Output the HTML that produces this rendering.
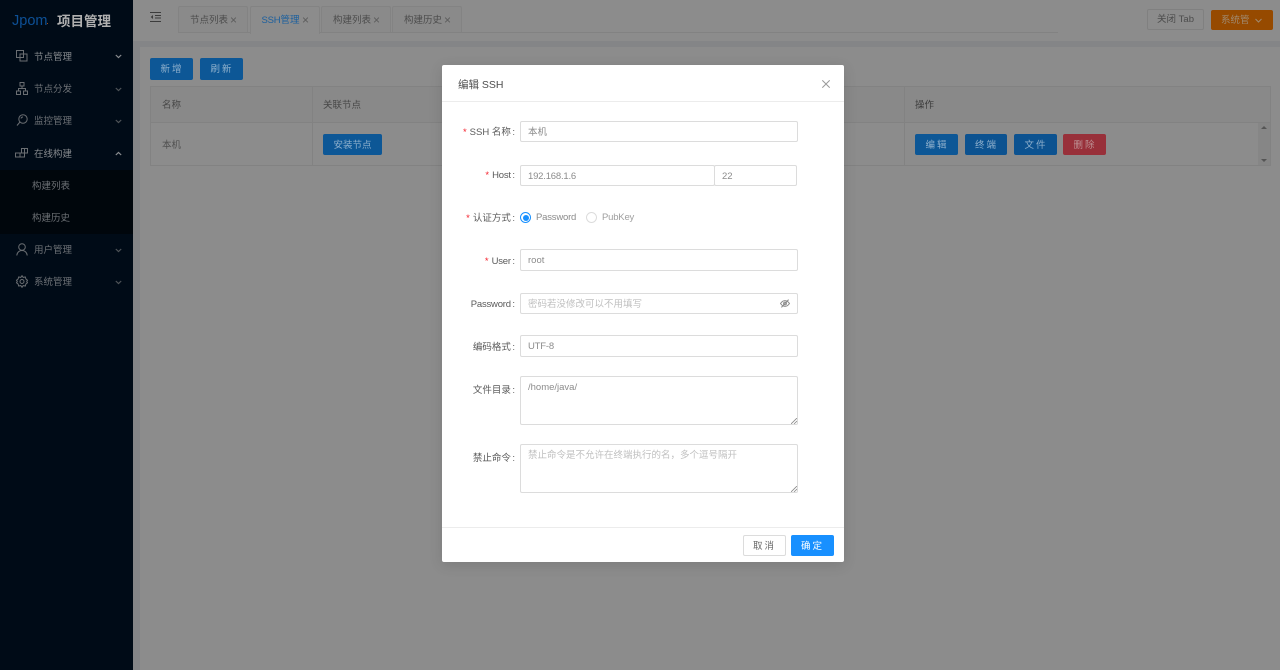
<!DOCTYPE html>
<html lang="zh"><head><meta charset="utf-8"><title>项目管理</title>
<style>
*{box-sizing:border-box;margin:0;padding:0}
html,body{width:1280px;height:670px;overflow:hidden;background:#8c8c8c}
body{font-family:"Liberation Sans","Noto Sans CJK SC",sans-serif;font-size:9.5px;color:#4a4a4a;position:relative;filter:blur(.3px)}
.a{position:absolute;white-space:nowrap}
.side{left:0;top:0;width:133px;height:670px;background:#000b17}
.sub{left:0;top:170px;width:133px;height:64px;background:#00060c}
.m{left:34px;color:#6d7176;line-height:14px;height:14px}
.m.on{color:#868a8e}
.s{left:32px;color:#6d7176;line-height:14px;height:14px}
.ic{position:absolute;fill:none;stroke:#6a6e72;stroke-width:1}
.tab{top:6px;height:27px;width:70px;border:1px solid #838383;border-bottom:0;border-radius:2px 2px 0 0;background:#8a8a8a;line-height:28px;padding-left:11px;color:#4c4c4c}
.tab i{font-style:normal;position:absolute;left:51px;top:0;color:#5c5c5c;font-size:12px;line-height:27px}
.btn{height:21.5px;border-radius:2px;background:#0d5796;color:#8fb0cc;text-align:center;line-height:23px;letter-spacing:2px;text-indent:1px}
.cell{background:#898989}
.line{background:#828282}
.modal{left:442px;top:65px;width:402px;height:497px;background:#fff;border-radius:2px;box-shadow:0 3px 14px rgba(0,0,0,.12)}
.lbl{right:765px;color:#5a5a5a;line-height:14px;height:14px;text-align:right}
.lbl b{color:#f5222d;font-weight:400;margin-right:3px;font-family:"Liberation Sans",sans-serif}
.lbl u{text-decoration:none;margin-left:1.5px}
.inp{left:520px;width:278px;height:21.5px;border:1px solid #dcdcdc;border-radius:2px;background:#fff;color:#8c8c8c;padding-left:7px;line-height:21px}
.ph{color:#bfbfbf}
.lat{letter-spacing:-.2px}
</style></head><body>

<div class="a side"></div>
<div class="a sub"></div>
<div class="a" style="left:12px;top:11.5px;font-size:14.5px;line-height:18px;color:#0d5096">Jpom</div>
<div class="a" style="left:46.5px;top:22.5px;width:1.5px;height:1.5px;background:#a8480d"></div>
<div class="a" style="left:57px;top:13px;font-size:13.5px;line-height:18px;font-weight:700;color:#b0b0b0">项目管理</div>

<svg class="ic" style="left:16px;top:50px" width="12" height="12" viewBox="0 0 12 12"><rect x=".5" y=".5" width="7" height="7"/><rect x="4" y="4" width="7" height="7"/></svg>
<div class="a m on" style="top:51px">节点管理</div>
<svg class="ic" style="left:16px;top:82px" width="12" height="13" viewBox="0 0 12 13"><rect x="4" y=".5" width="4" height="3.5"/><rect x=".5" y="9" width="4" height="3.5"/><rect x="7.5" y="9" width="4" height="3.5"/><path d="M6 4v2.5M2.5 9V6.5h7V9"/></svg>
<div class="a m" style="top:83px">节点分发</div>
<svg class="ic" style="left:16px;top:114px" width="12" height="12" viewBox="0 0 12 12"><circle cx="7" cy="5" r="4.2"/><path d="M4 8 1 11.5M5 4.5a2 2 0 0 1 2-1.5"/></svg>
<div class="a m" style="top:115px">监控管理</div>
<svg class="ic" style="left:15px;top:148px" width="13" height="10" viewBox="0 0 13 10"><rect x="6.5" y=".5" width="6" height="4.5"/><path d="M9.5.5V5"/><rect x=".5" y="5" width="9" height="4"/><path d="M5 5v4"/></svg>
<div class="a m on" style="top:148px">在线构建</div>
<div class="a s" style="top:180px">构建列表</div>
<div class="a s" style="top:212px">构建历史</div>
<svg class="ic" style="left:16px;top:243px" width="12" height="13" viewBox="0 0 12 13"><circle cx="6" cy="4" r="3.3"/><path d="M.8 12.5C1 9.5 3.2 7.5 6 7.5s5 2 5.2 5"/></svg>
<div class="a m" style="top:244px">用户管理</div>
<svg class="ic" style="left:16px;top:275px" width="12" height="13" viewBox="0 0 12 13"><path d="M6 .7 7.2 2.4 9.3 2l.6 2 1.6 1.3-.8 1.2.8 1.2L9.9 9l-.6 2-2.1-.4L6 12.3l-1.2-1.7-2.1.4-.6-2L.5 7.7l.8-1.2-.8-1.2L2.1 4l.6-2 2.1.4Z"/><circle cx="6" cy="6.5" r="2"/></svg>
<div class="a m" style="top:276px">系统管理</div>

<svg class="ic" style="left:115px;top:54px;stroke:#8a8d90" width="7" height="5" viewBox="0 0 7 5"><path d="M.8 1 3.5 3.6 6.2 1" stroke-width="1.2"/></svg>
<svg class="ic" style="left:115px;top:87px;stroke:#4f5458" width="7" height="5" viewBox="0 0 7 5"><path d="M.8 1 3.5 3.6 6.2 1" stroke-width="1.2"/></svg>
<svg class="ic" style="left:115px;top:119px;stroke:#4f5458" width="7" height="5" viewBox="0 0 7 5"><path d="M.8 1 3.5 3.6 6.2 1" stroke-width="1.2"/></svg>
<svg class="ic" style="left:115px;top:151px;stroke:#8a8d90" width="7" height="5" viewBox="0 0 7 5"><path d="M.8 4 3.5 1.4 6.2 4" stroke-width="1.2"/></svg>
<svg class="ic" style="left:115px;top:248px;stroke:#4f5458" width="7" height="5" viewBox="0 0 7 5"><path d="M.8 1 3.5 3.6 6.2 1" stroke-width="1.2"/></svg>
<svg class="ic" style="left:115px;top:280px;stroke:#4f5458" width="7" height="5" viewBox="0 0 7 5"><path d="M.8 1 3.5 3.6 6.2 1" stroke-width="1.2"/></svg>

<div class="a" style="left:133px;top:41px;width:1147px;height:6px;background:#848587"></div>
<div class="a" style="left:133px;top:47px;width:7px;height:623px;background:#848587"></div>

<svg class="ic" style="left:150px;top:12px;stroke:#3c3c3c" width="12" height="10" viewBox="0 0 12 10"><path d="M0 .5h11M5 3.5h6M5 6h6M0 9.5h11"/><path d="M3 3 .7 5 3 7Z" fill="#3c3c3c" stroke="none"/></svg>

<div class="a tab" style="left:178px">节点列表<i>×</i></div>
<div class="a tab" style="left:250px;background:#8c8c8c;color:#1b5f9e;height:28px;padding-left:10.5px"><span class="lat">SSH</span>管理<i>×</i></div>
<div class="a tab" style="left:321px">构建列表<i>×</i></div>
<div class="a tab" style="left:392px">构建历史<i>×</i></div>
<div class="a line" style="left:178px;top:32px;width:72px;height:1px"></div>
<div class="a line" style="left:319px;top:32px;width:739px;height:1px"></div>
<div class="a" style="left:1147px;top:9px;width:57px;height:21px;border:1px solid #808080;border-radius:2px;text-align:center;line-height:20px;color:#4c4c4c">关闭 Tab</div>
<div class="a" style="left:1211px;top:10px;width:62px;height:20px;background:#964a00;border-radius:2px;color:#a08a70;line-height:21px;padding-left:10px">系统管<svg style="position:absolute;left:44px;top:8px;fill:none;stroke:#a08a70" width="7" height="5" viewBox="0 0 7 5"><path d="M.5 1 3.5 4 6.5 1"/></svg></div>

<div class="a btn" style="left:150px;top:58px;width:43px">新增</div>
<div class="a btn" style="left:200px;top:58px;width:43px">刷新</div>

<div class="a cell" style="left:150px;top:86px;width:1121px;height:36px"></div>
<div class="a line" style="left:150px;top:86px;width:1121px;height:1px"></div>
<div class="a line" style="left:150px;top:122px;width:1121px;height:1px"></div>
<div class="a line" style="left:150px;top:165px;width:1121px;height:1px"></div>
<div class="a line" style="left:150px;top:86px;width:1px;height:80px"></div>
<div class="a line" style="left:312px;top:86px;width:1px;height:80px"></div>
<div class="a line" style="left:904px;top:86px;width:1px;height:80px"></div>
<div class="a line" style="left:1270px;top:86px;width:1px;height:80px"></div>
<div class="a" style="left:1258px;top:123px;width:12px;height:42px;background:#868686"></div>
<svg class="a" style="left:1261px;top:126px" width="6" height="36" viewBox="0 0 6 36"><path d="M3 0 6 3H0ZM0 33h6L3 36Z" fill="#555"/></svg>
<div class="a" style="left:162px;top:98.5px;line-height:14px;color:#464646">名称</div>
<div class="a" style="left:323px;top:98.5px;line-height:14px;color:#464646">关联节点</div>
<div class="a" style="left:915px;top:98.5px;line-height:14px;color:#3c3c3c">操作</div>
<div class="a" style="left:162px;top:139px;line-height:14px;color:#505050">本机</div>
<div class="a btn" style="left:323px;top:133.5px;width:59px;letter-spacing:0;text-indent:0">安装节点</div>
<div class="a btn" style="left:915px;top:133.5px;width:43px">编辑</div>
<div class="a btn" style="left:965px;top:133.5px;width:42px;background:#0c5290">终端</div>
<div class="a btn" style="left:1014px;top:133.5px;width:43px;background:#0c5290">文件</div>
<div class="a btn" style="left:1063px;top:133.5px;width:43px;background:#98303a;color:#bd9194">删除</div>

<div class="a modal"></div>
<div class="a" style="left:442px;top:101px;width:402px;height:1px;background:#ececec"></div>
<div class="a" style="left:442px;top:527px;width:402px;height:1px;background:#ececec"></div>
<div class="a" style="left:458px;top:77.5px;font-size:10.5px;line-height:15px;color:#4e4e4e">编辑 SSH</div>
<svg class="a" style="left:822px;top:80px" width="8" height="8" viewBox="0 0 8 8"><path d="M.3.3 7.7 7.7M7.7.3.3 7.7" stroke="#9a9a9a" stroke-width="1" fill="none"/></svg>

<div class="a lbl" style="top:126px"><b>*</b>SSH 名称<u>:</u></div>
<div class="a inp" style="top:120.5px">本机</div>
<div class="a lbl" style="top:169px"><b>*</b><span class="lat">Host</span><u>:</u></div>
<div class="a inp" style="top:164.5px;width:195px"><span class="lat">192.168.1.6</span></div>
<div class="a inp" style="top:164.5px;left:714px;width:83px">22</div>
<div class="a lbl" style="top:212px"><b>*</b>认证方式<u>:</u></div>
<div class="a" style="left:520px;top:212px;width:11px;height:11px;border:1px solid #1890ff;border-radius:50%"></div>
<div class="a" style="left:522.5px;top:214.5px;width:6px;height:6px;background:#1890ff;border-radius:50%"></div>
<div class="a lat" style="left:536px;top:211px;line-height:14px;color:#8c8c8c">Password</div>
<div class="a" style="left:585.5px;top:212px;width:11px;height:11px;border:1px solid #dcdcdc;border-radius:50%"></div>
<div class="a lat" style="left:602px;top:211px;line-height:14px;color:#a0a0a0">PubKey</div>
<div class="a lbl" style="top:255px"><b>*</b><span class="lat">User</span><u>:</u></div>
<div class="a inp" style="top:249px">root</div>
<div class="a lbl" style="top:298px"><span class="lat">Password</span><u>:</u></div>
<div class="a inp ph" style="top:292.5px">密码若没修改可以不用填写</div>
<svg class="a" style="left:780px;top:298.5px" width="10" height="9" viewBox="0 0 10 9"><path d="M.5 4.5C2 2.4 3.4 1.6 5 1.6s3 .8 4.5 2.9C8 6.6 6.6 7.4 5 7.4S2 6.6.5 4.5Z" fill="none" stroke="#8a8a8a"/><circle cx="5" cy="4.5" r="1.4" fill="none" stroke="#8a8a8a"/><path d="M8.6.6 1.4 8.4" stroke="#8a8a8a"/></svg>
<div class="a lbl" style="top:341px">编码格式<u>:</u></div>
<div class="a inp" style="top:335px"><span class="lat">UTF-8</span></div>
<div class="a lbl" style="top:384px">文件目录<u>:</u></div>
<div class="a inp" style="top:375.5px;height:49.5px;line-height:21px">/home/java/</div>
<svg class="a" style="left:791px;top:418px" width="6" height="6" viewBox="0 0 6 6"><path d="M0 6 6 0M3 6 6 3" stroke="#8a8a8a" stroke-width=".8"/></svg>
<div class="a lbl" style="top:452px">禁止命令<u>:</u></div>
<div class="a inp ph" style="top:443.5px;height:49px;line-height:21px">禁止命令是不允许在终端执行的名，多个逗号隔开</div>
<svg class="a" style="left:791px;top:486px" width="6" height="6" viewBox="0 0 6 6"><path d="M0 6 6 0M3 6 6 3" stroke="#8a8a8a" stroke-width=".8"/></svg>

<div class="a" style="left:743px;top:534.5px;width:43px;height:21.5px;border:1px solid #dcdcdc;border-radius:2px;text-align:center;line-height:21px;letter-spacing:2px;color:#6a6a6a;background:#fff">取消</div>
<div class="a" style="left:791px;top:534.5px;width:43px;height:21.5px;border-radius:2px;text-align:center;line-height:23px;letter-spacing:2px;color:#fff;background:#1890ff">确定</div>
</body></html>
